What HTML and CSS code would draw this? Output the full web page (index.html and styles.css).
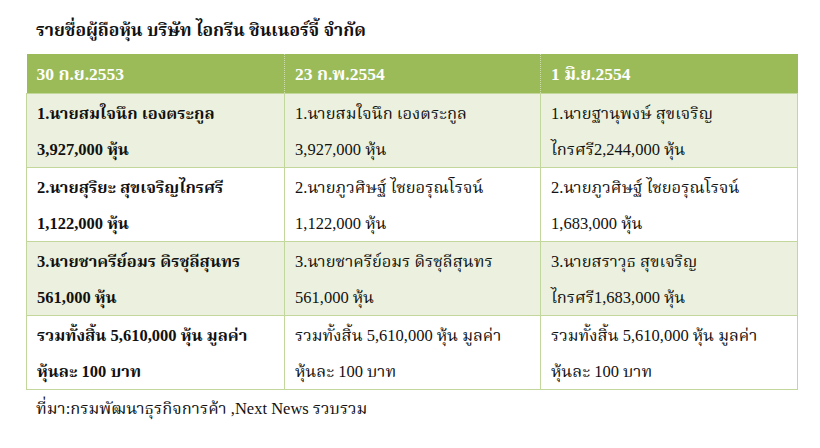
FILE: index.html
```html
<!DOCTYPE html>
<html lang="th">
<head>
<meta charset="utf-8">
<link rel="stylesheet" href="styles.css">
</head>
<body>
<div class="page">
  <h1 class="title">รายชื่อผู้ถือหุ้น บริษัท ไอกรีน ชินเนอร์จี้ จำกัด</h1>
  <table class="tbl">
    <colgroup><col class="c1"><col class="c2"><col class="c3"></colgroup>
    <thead>
      <tr><th>30 ก.ย.2553</th><th>23 ก.พ.2554</th><th>1 มิ.ย.2554</th></tr>
    </thead>
    <tbody>
      <tr class="alt">
        <td class="b">1.นายสมใจนึก เองตระกูล<br>3,927,000 หุ้น</td>
        <td>1.นายสมใจนึก เองตระกูล<br>3,927,000 หุ้น</td>
        <td>1.นายฐานุพงษ์ สุขเจริญ<br>ไกรศรี2,244,000 หุ้น</td>
      </tr>
      <tr>
        <td class="b">2.นายสุริยะ สุขเจริญไกรศรี<br>1,122,000 หุ้น</td>
        <td>2.นายภูวศิษฐ์ ไชยอรุณโรจน์<br>1,122,000 หุ้น</td>
        <td>2.นายภูวศิษฐ์ ไชยอรุณโรจน์<br>1,683,000 หุ้น</td>
      </tr>
      <tr class="alt">
        <td class="b">3.นายชาครีย์อมร ดิรชุลีสุนทร<br>561,000 หุ้น</td>
        <td>3.นายชาครีย์อมร ดิรชุลีสุนทร<br>561,000 หุ้น</td>
        <td>3.นายสราวุธ สุขเจริญ<br>ไกรศรี1,683,000 หุ้น</td>
      </tr>
      <tr>
        <td class="b">รวมทั้งสิ้น 5,610,000 หุ้น มูลค่า<br>หุ้นละ 100 บาท</td>
        <td>รวมทั้งสิ้น 5,610,000 หุ้น มูลค่า<br>หุ้นละ 100 บาท</td>
        <td>รวมทั้งสิ้น 5,610,000 หุ้น มูลค่า<br>หุ้นละ 100 บาท</td>
      </tr>
    </tbody>
  </table>
  <p class="source">ที่มา:กรมพัฒนาธุรกิจการค้า ,Next News รวบรวม</p>
</div>
</body>
</html>
```
FILE: styles.css
```css
html, body {
  margin: 0;
  padding: 0;
  background: #ffffff;
}
body {
  font-family: "Liberation Serif", "Noto Serif Thai", serif;
  color: #111111;
}
.page {
  padding: 16px 0 0 26px;
  width: 771px;
}
.title {
  margin: 0 0 10px 10px;
  font-size: 17.5px;
  font-weight: bold;
  line-height: 28px;
}
.tbl {
  border-collapse: collapse;
  width: 771px;
  table-layout: fixed;
}
.c1 { width: 258px; }
.c2 { width: 256px; }
.c3 { width: 257px; }
.tbl th {
  background: #9bbb59;
  color: #ffffff;
  text-align: left;
  font-size: 17.5px;
  font-weight: bold;
  padding: 3px 10px 0;
  height: 36px;
  border-left: 1px dotted #cddcaa;
}
.tbl th:first-child { border-left: none; }
.tbl td {
  font-size: 16.5px;
  line-height: 35.5px;
  padding: 2px 10px 0;
  vertical-align: top;
  white-space: nowrap;
  border: 1px solid #c3d69b;
}
.tbl td.b { font-weight: bold; }
.tbl tr.alt td { background: #ebf1de; }
.source {
  margin: 6px 0 0 10px;
  font-size: 16.5px;
  line-height: 26px;
}
```
